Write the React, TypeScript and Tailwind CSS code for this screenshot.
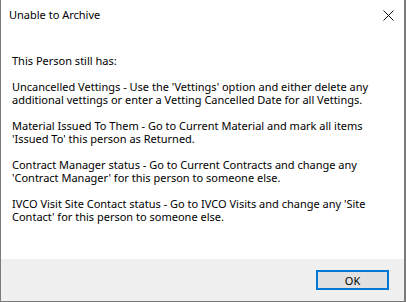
import React from 'react';

const paragraphs: string[][] = [
  ['This Person still has:'],
  [
    "Uncancelled Vettings - Use the 'Vettings' option and either delete any",
    'additional vettings or enter a Vetting Cancelled Date for all Vettings.',
  ],
  [
    'Material Issued To Them - Go to Current Material and mark all items',
    "'Issued To' this person as Returned.",
  ],
  [
    'Contract Manager status - Go to Current Contracts and change any',
    "'Contract Manager' for this person to someone else.",
  ],
  [
    "IVCO Visit Site Contact status - Go to IVCO Visits and change any 'Site",
    "Contact' for this person to someone else.",
  ],
];

export default function App() {
  return (
    <div
      className="w-[406px] h-[302px] flex flex-col bg-white border-l border-r-2 border-b border-[#7a7a7a] text-black text-[11px]"
      style={{ fontFamily: '"Noto Sans", "Open Sans", sans-serif' }}
    >
      {/* title bar */}
      <div className="h-[30px] flex items-center justify-between pl-[8px] pr-[9px]">
        <span className="leading-[14px]">Unable to Archive</span>
        <svg width="11" height="11" viewBox="0 0 11 11" className="mr-[1px]">
          <path d="M0.5 0.5 L10.5 10.5 M10.5 0.5 L0.5 10.5" stroke="#111" strokeWidth="1" />
        </svg>
      </div>

      {/* message */}
      <div className="flex-1 pt-[24px] pl-[11px] leading-[13px]">
        {paragraphs.map((p, i) => (
          <div key={i} className="mb-[13px]">
            {p.map((line, j) => (
              <div key={j} className="whitespace-nowrap">
                {line}
              </div>
            ))}
          </div>
        ))}
      </div>

      {/* footer */}
      <div className="h-[42px] bg-[#f0f0f0] flex items-start justify-end pt-[11px] pr-[15px]">
        <button className="w-[73px] h-[20px] border-2 border-[#0078d7] bg-[#e1e1e1] flex items-center justify-center leading-none">
          OK
        </button>
      </div>
    </div>
  );
}
